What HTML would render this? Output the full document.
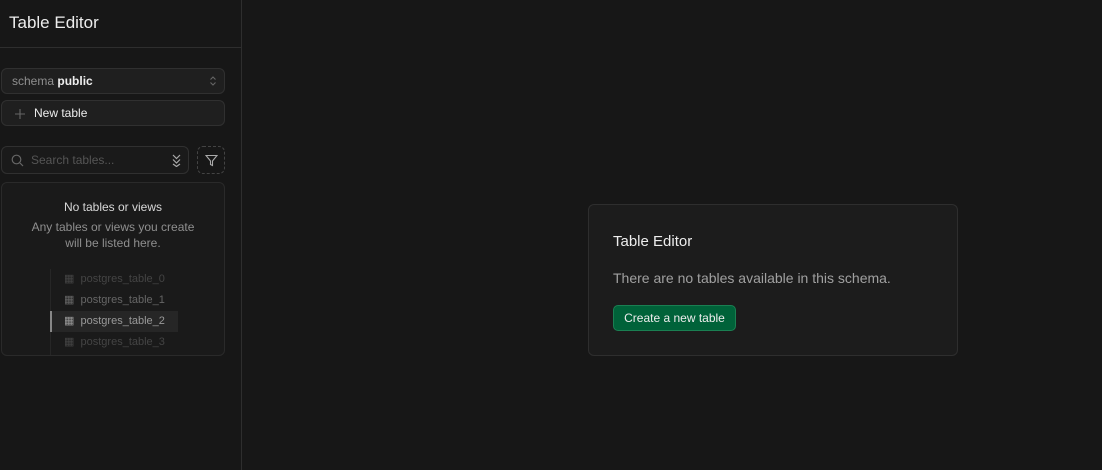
<!DOCTYPE html>
<html><head><style>
*{box-sizing:border-box;margin:0;padding:0}
body{width:1102px;height:470px;background:#171717;font-family:"Liberation Sans",sans-serif;color:#ededed;position:relative;overflow:hidden}
.side{position:absolute;left:0;top:0;width:242px;height:470px;border-right:1px solid #2e2e2e}
.hdr{height:48px;border-bottom:1px solid #2e2e2e;padding:13px 9px;font-size:17px;color:#ededed}
.box{position:absolute;border:1px solid #303030;border-radius:6px;background:#1f1f1f}
.abs{position:absolute}
</style></head><body>
<div class="side">
<div class="hdr">Table Editor</div>
<div class="box" style="left:1px;top:68px;width:224px;height:26px;font-size:12px;padding:5px 10px"><span style="color:#8f8f8f">schema</span> <b style="color:#ededed">public</b>
<svg class="abs" style="right:7px;top:6px" width="8" height="12" viewBox="0 0 8 12" fill="none" stroke="#666" stroke-width="1.1"><path d="M1.5 4.5L4 2l2.5 2.5M1.5 7.5L4 10l2.5-2.5"/></svg></div>
<div class="box" style="left:1px;top:100px;width:224px;height:26px;font-size:12px;padding:5px 10px">
<svg class="abs" style="left:13px;top:8px" width="10" height="10" viewBox="0 0 10 10" stroke="#666" stroke-width="1.1"><path d="M5 0v10M0 5h10"/></svg>
<span style="margin-left:22px;color:#ededed">New table</span></div>
<div class="box" style="left:1px;top:146px;width:188px;height:28px;background:#1a1a1a">
<svg class="abs" style="left:9px;top:7px" width="13" height="13" viewBox="0 0 13 13" fill="none" stroke="#666" stroke-width="1.2"><circle cx="5.5" cy="5.5" r="4.3"/><path d="M9 9l3 3"/></svg>
<span class="abs" style="left:29px;top:6px;font-size:12px;color:#555">Search tables...</span>
<svg class="abs" style="left:169px;top:7px" width="11" height="13" viewBox="0 0 11 13" fill="none" stroke="#aaa" stroke-width="1.2"><path d="M2 1l3.5 3.5L9 1M2 5.5L5.5 9 9 5.5M2 10l3.5 2.5L9 10"/></svg>
</div>
<div class="abs" style="left:197px;top:146px;width:28px;height:28px;border:1px dashed #444;border-radius:6px">
<svg class="abs" style="left:7px;top:7px" width="13" height="13" viewBox="0 0 13 13" fill="none" stroke="#aaa" stroke-width="1.1"><path d="M1 1.5h11L7.5 7v4.5l-2-1V7z"/></svg></div>
<div class="box" style="left:1px;top:182px;width:224px;height:174px;background:#1a1a1a;border-color:#2a2a2a">
<div class="abs" style="left:0;width:222px;top:17px;text-align:center;font-size:12px;color:#d8d8d8">No tables or views</div>
<div class="abs" style="left:0;width:222px;top:36px;text-align:center;font-size:12px;color:#8f8f8f;line-height:16px">Any tables or views you create<br>will be listed here.</div>
<div class="abs" style="left:48px;top:86px;width:1px;height:86px;background:#262626"></div>
<div class="abs" style="left:48px;top:128px;width:2px;height:21px;background:#888"></div>
<div class="abs" style="left:50px;top:128px;width:126px;height:21px;background:#262626"></div>
<div class="abs" style="left:62px;top:86px;font-size:11px;line-height:21px;color:#444">
<div>&#9638;&nbsp; postgres_table_0</div>
<div style="color:#666">&#9638;&nbsp; postgres_table_1</div>
<div style="color:#999">&#9638;&nbsp; postgres_table_2</div>
<div>&#9638;&nbsp; postgres_table_3</div></div>
</div>
</div>
<div class="box" style="left:588px;top:204px;width:370px;height:152px;border-color:#2e2e2e;background:#1c1c1c">
<div class="abs" style="left:24px;top:28px;font-size:15px;color:#ededed">Table Editor</div>
<div class="abs" style="left:24px;top:65px;font-size:14px;color:#a0a0a0">There are no tables available in this schema.</div>
<div class="abs" style="left:24px;top:100px;width:123px;height:26px;background:#006239;border:1px solid #1a7f52;border-radius:5px;font-size:12px;color:#ededed;text-align:center;line-height:24px">Create a new table</div>
</div>
</body></html>
